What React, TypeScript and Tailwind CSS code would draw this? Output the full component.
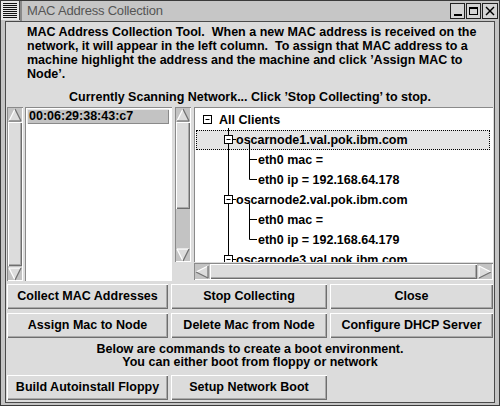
import React from 'react'

const raised = 'shadow-[inset_1px_1px_0_#ffffff,inset_-1px_-1px_0_#6e6e6e,inset_-2px_-2px_0_#a9a9a9]'
const sunken = 'shadow-[inset_1px_1px_0_#8a8a8a,inset_-1px_-1px_0_#ffffff]'

type Dir = 'up' | 'down' | 'left' | 'right'

function Arrow({ dir }: { dir: Dir }) {
  const shapes: Record<Dir, { pts: string; light: number[][]; dark: number[][] }> = {
    up: { pts: '7,1 13,13 1,13', light: [[7, 1, 1, 13]], dark: [[7, 1, 13, 13], [1, 13, 13, 13]] },
    down: { pts: '1,1 13,1 7,13', light: [[1, 1, 13, 1], [1, 1, 7, 13]], dark: [[13, 1, 7, 13]] },
    left: { pts: '1,7 13,1 13,13', light: [[1, 7, 13, 1]], dark: [[1, 7, 13, 13], [13, 1, 13, 13]] },
    right: { pts: '1,1 13,7 1,13', light: [[1, 1, 13, 7], [1, 1, 1, 13]], dark: [[1, 13, 13, 7]] },
  }
  const s = shapes[dir]
  return (
    <svg width="14" height="14" viewBox="0 0 14 14" className="shrink-0">
      <polygon points={s.pts} fill="#dcdcdc" />
      {s.light.map((l, i) => (
        <line key={'l' + i} x1={l[0]} y1={l[1]} x2={l[2]} y2={l[3]} stroke="#ffffff" strokeWidth="1.2" />
      ))}
      {s.dark.map((l, i) => (
        <line key={'d' + i} x1={l[0]} y1={l[1]} x2={l[2]} y2={l[3]} stroke="#707070" strokeWidth="1.2" />
      ))}
    </svg>
  )
}

function VScroll({ thumb, trough }: { thumb: string; trough: string }) {
  return (
    <div className={`w-[16px] h-full bg-[#c3c3c3] flex flex-col items-center ${sunken}`}>
      <div className="h-[15px] flex items-center justify-center pt-[1px]">
        <Arrow dir="up" />
      </div>
      <div className={`w-[14px] ${thumb} bg-[#dcdcdc] ${raised}`} />
      <div className={trough} />
      <div className="h-[15px] flex items-center justify-center">
        <Arrow dir="down" />
      </div>
    </div>
  )
}

function Btn({ label }: { label: string }) {
  return (
    <div className={`h-[25px] bg-[#dcdcdc] flex items-center justify-center text-[12.5px] font-bold text-black ${raised}`}>
      {label}
    </div>
  )
}

function TreeRow({ pl, children }: { pl: string; children: React.ReactNode }) {
  return <div className={`h-[20px] leading-[20px] whitespace-nowrap ${pl}`}>{children}</div>
}

function Tree() {
  const minus = (x: number, y: number) => (
    <g>
      <rect x={x + 0.5} y={y - 4} width="8" height="8" fill="#ffffff" stroke="#000" />
      <line x1={x + 2.5} y1={y} x2={x + 6.5} y2={y} stroke="#000" />
    </g>
  )
  const r = [12.5, 32.5, 52.5, 72.5, 92.5, 112.5, 132.5, 152.5]
  return (
    <div className={`relative flex-1 bg-white overflow-hidden ${sunken}`}>
      <div className="pt-[2.5px] text-[12.5px] font-bold text-black">
        <TreeRow pl="pl-[25px]">All Clients</TreeRow>
        <div className="h-[20px] leading-[18px] ml-[2px] mr-[3px] border border-dotted border-black bg-[#e4e4e4] pl-[39px] whitespace-nowrap">
          oscarnode1.val.pok.ibm.com
        </div>
        <TreeRow pl="pl-[64px]">eth0 mac =</TreeRow>
        <TreeRow pl="pl-[64px]">eth0 ip = 192.168.64.178</TreeRow>
        <TreeRow pl="pl-[42px]">oscarnode2.val.pok.ibm.com</TreeRow>
        <TreeRow pl="pl-[64px]">eth0 mac =</TreeRow>
        <TreeRow pl="pl-[64px]">eth0 ip = 192.168.64.179</TreeRow>
        <TreeRow pl="pl-[42px]">oscarnode3.val.pok.ibm.com</TreeRow>
      </div>
      <svg className="absolute inset-0 pointer-events-none" width="299" height="155">
        <line x1="34.5" y1="21" x2="34.5" y2={r[7]} stroke="#000" />
        {minus(9, r[0])}
        {[r[1], r[4], r[7]].map((y) => (
          <g key={y}>
            <line x1="38" y1={y} x2="42" y2={y} stroke="#000" />
            {minus(30, y)}
          </g>
        ))}
        <line x1="55.5" y1={r[1] + 4} x2="55.5" y2={r[3]} stroke="#000" />
        <line x1="55.5" y1={r[4] + 4} x2="55.5" y2={r[6]} stroke="#000" />
        {[r[2], r[3], r[5], r[6]].map((y) => (
          <line key={y} x1="55.5" y1={y} x2="63" y2={y} stroke="#000" />
        ))}
      </svg>
    </div>
  )
}

function TitleBar() {
  return (
    <div className="h-[20px] flex bg-[#c6c6c6] shrink-0">
      <div className="w-[19px] h-[19px] bg-[#e8e8e8] border-r border-[#444]">
        <svg width="18" height="19" viewBox="0 0 18 19">
          {[2, 4, 6, 8, 10, 12, 14, 16].map((y) => (
            <line key={y} x1="2" y1={y + 0.5} x2="16" y2={y + 0.5} stroke="#111" />
          ))}
        </svg>
      </div>
      <div className="w-[2px] h-full bg-[#8a8a8a]" />
      <div className="flex-1 pl-[5px] text-[13px] leading-[20px] text-[#555] tracking-[-0.2px]">MAC Address Collection</div>
      <div className="flex gap-[1px] pt-[2px] pr-[1px]">
        <div className="w-[15px] h-[16px] border border-[#222] bg-[#d4d4d4] flex items-end justify-center pb-[2px]">
          <div className="w-[8px] h-[2px] bg-black" />
        </div>
        <div className="w-[15px] h-[16px] border border-[#222] bg-[#d4d4d4] flex items-center justify-center">
          <div className="w-[9px] h-[8px] border border-black border-t-2" />
        </div>
        <div className="w-[16px] h-[16px] border border-[#222] bg-[#d4d4d4] flex items-center justify-center">
          <svg width="10" height="10" viewBox="0 0 10 10">
            <line x1="1" y1="1" x2="9" y2="9" stroke="#000" strokeWidth="1.4" />
            <line x1="9" y1="1" x2="1" y2="9" stroke="#000" strokeWidth="1.4" />
          </svg>
        </div>
      </div>
    </div>
  )
}

export default function App() {
  return (
    <div className="w-[500px] h-[406px] bg-[#c4c4c4] border border-[#3a3a3a] flex flex-col overflow-hidden font-['Liberation_Sans',Arial,sans-serif]">
      <TitleBar />
      <div className="flex-1 mx-[4px] mb-[2px] border border-[#4a4a4a] bg-[#dcdcdc] flex flex-col text-black">
        <div className="pt-[3px] pl-[21px] text-[12.5px] font-bold leading-[14px] whitespace-pre">
          {'MAC Address Collection Tool.  When a new MAC address is received on the\nnetwork, it will appear in the left column.  To assign that MAC address to a\nmachine highlight the address and the machine and click \u2019Assign MAC to\nNode\u2019.'}
        </div>
        <div className="mt-[9px] text-center text-[12.5px] font-bold leading-[14px] whitespace-pre">
          {'Currently Scanning Network... Click \u2019Stop Collecting\u2019 to stop.'}
        </div>

        <div className="mt-[3px] h-[174px] flex pl-[1px]">
          <VScroll thumb="flex-1" trough="h-0" />
          <div className={`ml-[2px] w-[147px] h-full bg-white pt-[2px] pl-[2px] ${sunken}`}>
            <div className="w-[142px] h-[15px] leading-[15px] bg-[#c3c3c3] pl-[2px] text-[12.5px] font-bold shadow-[inset_1px_1px_0_#e8e8e8,inset_-1px_-1px_0_#8a8a8a]">
              00:06:29:38:43:c7
            </div>
          </div>
          <div className="ml-[3px] h-[155px]">
            <VScroll thumb="h-[87px]" trough="flex-1" />
          </div>
          <div className="ml-[3px] w-[299px] flex flex-col">
            <div className="h-[155px] flex">
              <Tree />
            </div>
            <div className={`mt-[1px] h-[17px] bg-[#c3c3c3] flex items-center ${sunken}`}>
              <div className="w-[16px] flex justify-center">
                <Arrow dir="left" />
              </div>
              <div className={`flex-1 h-[15px] bg-[#dcdcdc] ${raised}`} />
              <div className="w-[16px] flex justify-center">
                <Arrow dir="right" />
              </div>
            </div>
          </div>
        </div>

        <div className="mt-[3px] pl-[1px] grid grid-cols-[161px_156px_163px] gap-x-[3px] gap-y-[4px]">
          <Btn label="Collect MAC Addresses" />
          <Btn label="Stop Collecting" />
          <Btn label="Close" />
          <Btn label="Assign Mac to Node" />
          <Btn label="Delete Mac from Node" />
          <Btn label="Configure DHCP Server" />
        </div>

        <div className="mt-[5px] text-center text-[12.5px] font-bold leading-[13px]">
          <div>Below are commands to create a boot environment.</div>
          <div>You can either boot from floppy or network</div>
        </div>

        <div className="mt-[6px] pl-[1px] grid grid-cols-[161px_156px_163px] gap-x-[3px]">
          <Btn label="Build Autoinstall Floppy" />
          <Btn label="Setup Network Boot" />
        </div>
      </div>
    </div>
  )
}
